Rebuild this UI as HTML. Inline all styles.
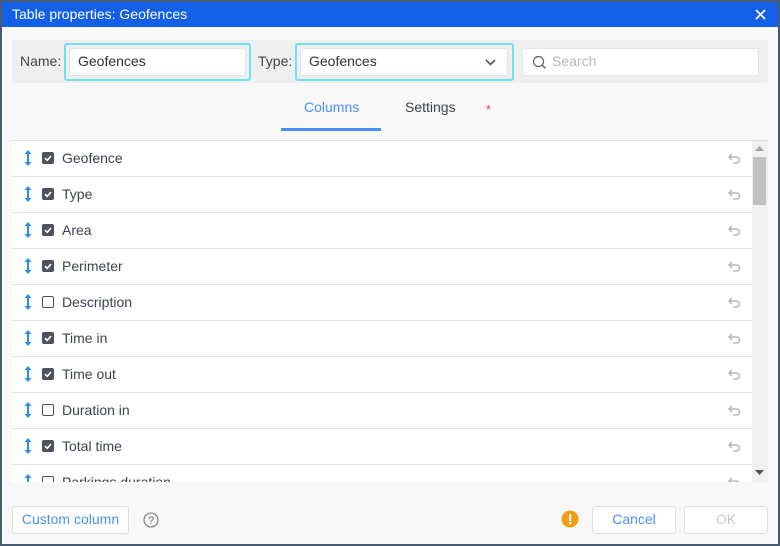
<!DOCTYPE html>
<html><head><style>
*{box-sizing:border-box;margin:0;padding:0}
body{width:780px;height:546px;background:#4a5870;font-family:"Liberation Sans",sans-serif;position:relative;overflow:hidden}
.dlg{position:absolute;left:2px;top:2px;width:776px;height:542px;background:#f8f8f8}
.title{position:absolute;left:2px;top:2px;width:776px;height:25px;background:#135fe6;color:#fff;font-size:14px;line-height:25px;padding-left:10px}
.x{position:absolute;right:12px;top:7px}
.a{position:absolute}
.bar{left:12px;top:40px;width:756px;height:43px;background:#efefef;border-radius:3px}
.lbl{font-size:14px;color:#444;top:53px}
.focus{border:2px solid #6fe0ef;border-radius:3px}
.inp{background:#fff;border:1px solid #e2e2e2;border-radius:3px;font-size:14px;color:#333;line-height:25px;padding-left:8px}
.row{position:absolute;left:12px;width:740px;height:36px;background:#fff;border-bottom:1px solid #e2e2e2}
.row span{position:absolute;left:50px;top:9px;font-size:14px;color:#3d4350}
.cb{position:absolute;left:30px;top:11px;width:12px;height:12px;border-radius:2px}
.on{background:#4d525e}
.off{border:1.5px solid #4d525e;background:#fff}
.btn{background:#fff;border:1px solid #dedede;border-radius:3px;font-size:14px;text-align:center;line-height:25px}
</style></head><body>
<div class="dlg"></div>
<div class="title">Table properties: Geofences
<svg class="x" width="11" height="11" viewBox="0 0 11 11"><path d="M1 1L10 10M10 1L1 10" stroke="#fff" stroke-width="1.8"/></svg></div>
<div class="a bar"></div>
<div class="a lbl" style="left:20px">Name:</div>
<div class="a focus" style="left:64px;top:43px;width:187px;height:38px"></div>
<div class="a inp" style="left:69px;top:48px;width:177px;height:28px">Geofences</div>
<div class="a lbl" style="left:258px">Type:</div>
<div class="a focus" style="left:295px;top:43px;width:219px;height:38px"></div>
<div class="a inp" style="left:300px;top:48px;width:208px;height:28px">Geofences
<svg style="position:absolute;right:11px;top:10px" width="11" height="7" viewBox="0 0 11 7"><path d="M1 1L5.5 5.5L10 1" stroke="#555" stroke-width="1.6" fill="none"/></svg></div>
<div class="a inp" style="left:522px;top:48px;width:237px;height:28px;color:#b5b8be;padding-left:29px">Search
<svg style="position:absolute;left:9px;top:6px" width="15" height="15" viewBox="0 0 15 15"><circle cx="6.5" cy="6.5" r="5" stroke="#666" stroke-width="1.3" fill="none"/><path d="M10 10L13.5 13.5" stroke="#666" stroke-width="1.4"/></svg></div>
<div class="a" style="left:304px;top:99px;font-size:14px;color:#4a90f5">Columns</div>
<div class="a" style="left:281px;top:128px;width:100px;height:3px;background:#4a8ff5"></div>
<div class="a" style="left:405px;top:99px;font-size:14px;color:#3d4350">Settings</div>
<div class="a" style="left:486px;top:102px;font-size:13px;color:#f03c3c">*</div>
<div class="a" style="left:12px;top:140px;width:756px;height:1px;background:#e2e2e2"></div>
<div class="a" id="lst" style="left:12px;top:141px;width:756px;height:341px;overflow:hidden">
<div style="position:relative;top:-141px;left:-12px"></div></div>
<div class="a" style="left:752px;top:141px;width:16px;height:341px;background:#f1f1f1"></div>
<div class="a" style="left:753px;top:157px;width:13px;height:48px;background:#c1c1c1"></div>
<svg class="a" style="left:755px;top:146px" width="9" height="5"><path d="M0 5L4.5 0L9 5Z" fill="#a3a3a3"/></svg>
<svg class="a" style="left:755px;top:470px" width="9" height="5"><path d="M0 0L4.5 5L9 0Z" fill="#505050"/></svg>
<div class="a btn" style="left:12px;top:506px;width:117px;height:28px;color:#4a90f5">Custom column</div>
<svg class="a" style="left:142px;top:511px" width="18" height="18"><circle cx="9" cy="9" r="7" stroke="#777" stroke-width="1.1" fill="none"/><text x="9" y="13" font-size="11" text-anchor="middle" fill="#777" font-family="Liberation Sans">?</text></svg>
<svg class="a" style="left:561px;top:510px" width="18" height="18"><circle cx="9" cy="9" r="8.5" fill="#f39c12"/><rect x="8" y="4" width="2.2" height="7" fill="#fff"/><rect x="8" y="12.2" width="2.2" height="2.2" fill="#fff"/></svg>
<div class="a btn" style="left:592px;top:506px;width:84px;height:28px;color:#4a90f5">Cancel</div>
<div class="a btn" style="left:684px;top:506px;width:84px;height:28px;color:#c4c6ca">OK</div>
<script>
var d=[["Geofence",1],["Type",1],["Area",1],["Perimeter",1],["Description",0],["Time in",1],["Time out",1],["Duration in",0],["Total time",1],["Parkings duration",0]];
var h='';d.forEach(function(r,i){var t=141+36*i;
h+='<div class="row" style="top:'+t+'px"><svg style="position:absolute;left:12px;top:8px" width="8" height="18" viewBox="0 0 8 18"><path d="M4 2V16" stroke="#2d8ff0" stroke-width="2"/><path d="M0.5 5L4 1L7.5 5ZM0.5 13L4 17L7.5 13Z" fill="#2d8ff0"/></svg><div class="cb '+(r[1]?'on':'off')+'">'+(r[1]?'<svg width="12" height="12" style="position:absolute;left:0;top:0"><path d="M3 6.2L5.2 8.3L9 4" stroke="#fff" stroke-width="1.6" fill="none"/></svg>':'')+'</div><span>'+r[0]+'</span><svg style="position:absolute;left:716px;top:12px" width="13" height="11" viewBox="0 0 13 11"><path d="M4 1L1 4L4 7M1 4H8.5A3 3 0 0 1 8.5 10H5" stroke="#b8bbc0" stroke-width="1.6" fill="none"/></svg></div>';});
document.querySelector('#lst > div').innerHTML=h;
</script>
</body></html>
